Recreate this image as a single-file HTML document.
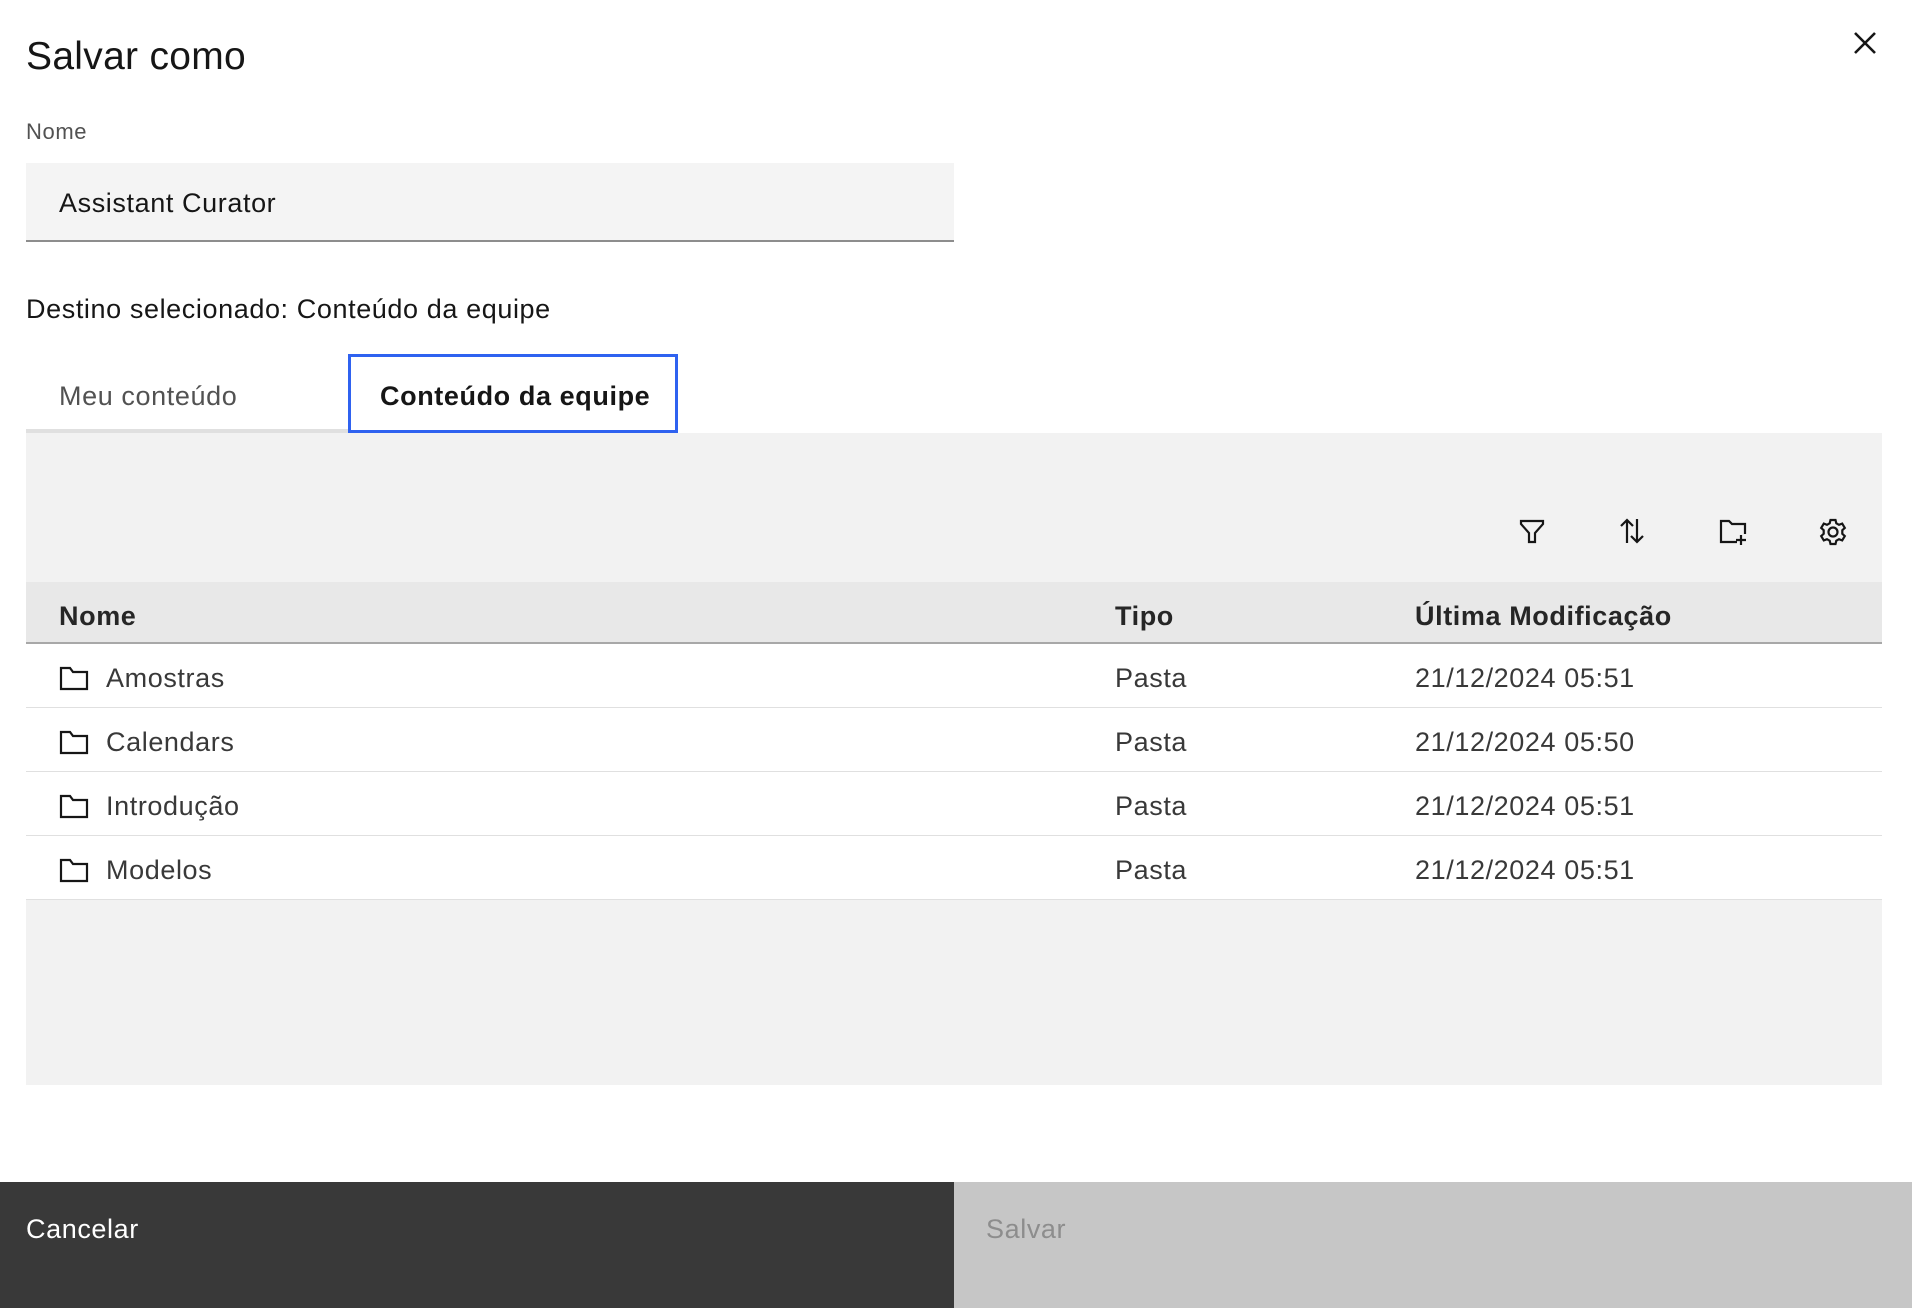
<!DOCTYPE html>
<html><head><meta charset="utf-8"><style>
*{box-sizing:border-box;margin:0;padding:0}
body{width:1912px;height:1308px;background:#fff;font-family:"Liberation Sans",sans-serif;color:#161616;position:relative;overflow:hidden;letter-spacing:0.6px}
.a{position:absolute;white-space:nowrap}
.row{position:absolute;left:26px;width:1856px;height:64px;border-bottom:1px solid #e0e0e0;font-size:27px;color:#393939;background:#fff}
.row span{position:absolute;top:19px}
</style></head><body>
<div class="a" style="left:26px;top:35px;font-size:39px;letter-spacing:0.3px">Salvar como</div>
<svg class="a" style="left:1852px;top:30px" width="26" height="26" viewBox="0 0 26 26"><path d="M3 3L23 23M23 3L3 23" stroke="#161616" stroke-width="2.6"/></svg>
<div class="a" style="left:26px;top:119px;font-size:22px;color:#525252">Nome</div>
<div class="a" style="left:26px;top:163px;width:928px;height:79px;background:#f4f4f4;border-bottom:2px solid #8d8d8d"></div>
<div class="a" style="left:59px;top:188px;font-size:27px;color:#161616">Assistant Curator</div>
<div class="a" style="left:26px;top:294px;font-size:27px">Destino selecionado: Conteúdo da equipe</div>
<div class="a" style="left:59px;top:381px;font-size:27px;color:#525252">Meu conteúdo</div>
<div class="a" style="left:26px;top:429px;width:322px;height:4px;background:#e0e0e0"></div>
<div class="a" style="left:348px;top:354px;width:330px;height:79px;border:3px solid #2f62f0"></div>
<div class="a" style="left:380px;top:381px;font-size:27px;font-weight:bold;color:#161616">Conteúdo da equipe</div>
<div class="a" style="left:26px;top:433px;width:1856px;height:652px;background:#f2f2f2"></div>
<svg class="a" style="left:1518px;top:517px" width="28" height="28" viewBox="0 0 28 28" fill="none" stroke="#161616" stroke-width="2.2"><path d="M3 4H25V7L17 16V25H11V16L3 7Z"/></svg>
<svg class="a" style="left:1618px;top:517px" width="28" height="28" viewBox="0 0 28 28" fill="none" stroke="#161616" stroke-width="2.2"><path d="M9 3V26M3 9L9 3L15 9M19 2V25M13 19L19 25L25 19"/></svg>
<svg class="a" style="left:1718px;top:517px" width="30" height="30" viewBox="0 0 30 30" fill="none" stroke="#161616" stroke-width="2.2"><path d="M19 25H3V4H11L14 7H27V17M23 18V28M18 23H28"/></svg>
<svg class="a" style="left:1818px;top:517px" width="30" height="30" viewBox="0 0 30 30" fill="none" stroke="#161616" stroke-width="2.2"><circle cx="15" cy="15" r="4.5"/><path d="M12.5 3H17.5L18.3 6.3L21 7.8L24.2 6.6L26.8 10.9L24.3 13.2V16.8L26.8 19.1L24.2 23.4L21 22.2L18.3 23.7L17.5 27H12.5L11.7 23.7L9 22.2L5.8 23.4L3.2 19.1L5.7 16.8V13.2L3.2 10.9L5.8 6.6L9 7.8L11.7 6.3Z"/></svg>
<div class="a" style="left:26px;top:582px;width:1856px;height:62px;background:#e8e8e8;border-bottom:2px solid #a8a8a8"></div>
<div class="a" style="left:59px;top:601px;font-size:27px;font-weight:bold;color:#262626">Nome</div>
<div class="a" style="left:1115px;top:601px;font-size:27px;font-weight:bold;color:#262626">Tipo</div>
<div class="a" style="left:1415px;top:601px;font-size:27px;font-weight:bold;color:#262626">Última Modificação</div>
<div class="row" style="top:644px"><svg class="a" style="left:33px;top:21px" width="30" height="26" viewBox="0 0 30 26" fill="none" stroke="#161616" stroke-width="2.2"><path d="M2 3H11L14 7H28V24H2Z"/></svg><span style="left:80px">Amostras</span><span style="left:1089px">Pasta</span><span style="left:1389px">21/12/2024 05:51</span></div>
<div class="row" style="top:708px"><svg class="a" style="left:33px;top:21px" width="30" height="26" viewBox="0 0 30 26" fill="none" stroke="#161616" stroke-width="2.2"><path d="M2 3H11L14 7H28V24H2Z"/></svg><span style="left:80px">Calendars</span><span style="left:1089px">Pasta</span><span style="left:1389px">21/12/2024 05:50</span></div>
<div class="row" style="top:772px"><svg class="a" style="left:33px;top:21px" width="30" height="26" viewBox="0 0 30 26" fill="none" stroke="#161616" stroke-width="2.2"><path d="M2 3H11L14 7H28V24H2Z"/></svg><span style="left:80px">Introdução</span><span style="left:1089px">Pasta</span><span style="left:1389px">21/12/2024 05:51</span></div>
<div class="row" style="top:836px"><svg class="a" style="left:33px;top:21px" width="30" height="26" viewBox="0 0 30 26" fill="none" stroke="#161616" stroke-width="2.2"><path d="M2 3H11L14 7H28V24H2Z"/></svg><span style="left:80px">Modelos</span><span style="left:1089px">Pasta</span><span style="left:1389px">21/12/2024 05:51</span></div>
<div class="a" style="left:0;top:1182px;width:954px;height:126px;background:#393939"></div>
<div class="a" style="left:954px;top:1182px;width:958px;height:126px;background:#c6c6c6"></div>
<div class="a" style="left:26px;top:1214px;font-size:27px;color:#fff">Cancelar</div>
<div class="a" style="left:986px;top:1214px;font-size:27px;color:#8d8d8d">Salvar</div>
</body></html>
